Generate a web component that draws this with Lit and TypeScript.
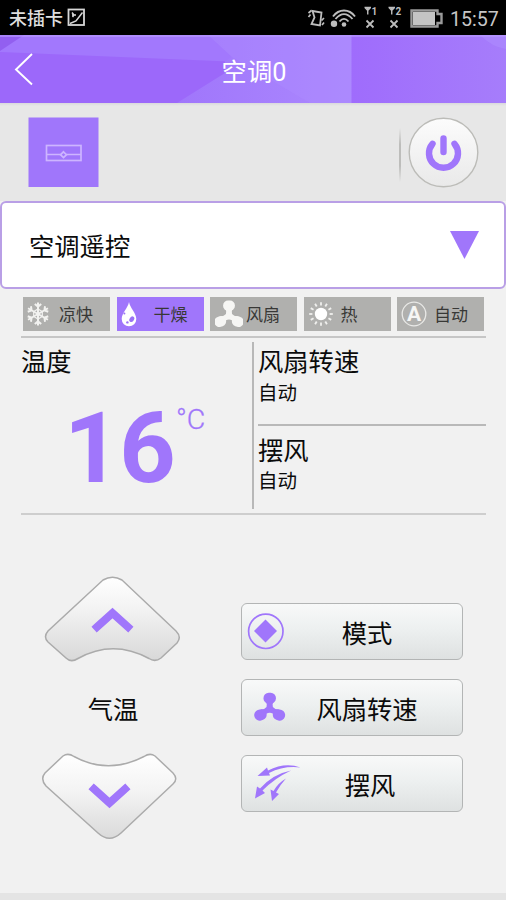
import { LitElement, html, css, svg } from "lit";
import { customElement, property } from "lit/decorators.js";

const fan = svg`
  <rect x="-5.500" y="-12.600" width="11" height="9.600" rx="4.600"/>
  <rect x="-5.500" y="-4.800" width="11" height="9.600" rx="4.600" transform="translate(-8.200 7) rotate(-18)"/>
  <rect x="-5.500" y="-4.800" width="11" height="9.600" rx="4.600" transform="translate(8.200 7) rotate(18)"/>
  <path d="M-3.800 -5L3.800 -5Q1.800 -2.500 2.800 0Q5 2.400 8 2.200L6 11Q4.500 7.500 3 6Q0 4 -3 6Q-4.500 7.500 -6 11L-8 2.200Q-5 2.400 -2.800 0Q-1.800 -2.500 -3.800 -5Z"/>`;

const flake = [0, 60, 120, 180, 240, 300].map(
  (a) => svg`<path transform="rotate(${a})" d="M0 0V-11.500M-3.200 -10L0 -7.400L3.200 -10"/>`
);
const rays = Array.from({ length: 12 }, (_, i) => svg`<path transform="rotate(${i * 30})" d="M0 -8.600V-11.800"/>`);

const icons: Record<string, unknown> = {
  cool: svg`<g fill="none" stroke="#f2f2f0" stroke-width="2">${flake}<path d="M0 -5L4.300 -2.500V2.500L0 5L-4.300 2.500V-2.500Z" stroke-width="1.2"/></g>`,
  dry: svg`<path fill="#fff" d="M0 -12C1 -6 7.300 -1 7.300 5A7.300 7.300 0 0 1 -7.300 5C-7.300 -1 -1 -6 0 -12Z"/>
    <g fill="#9a72f4"><ellipse cx="2.800" cy="5.200" rx="2.200" ry="3" transform="rotate(35 2.800 5.200)"/><circle cx="-1.600" cy="8.400" r="1.200"/><circle cx="-4.600" cy="-.6" r="1"/></g>`,
  fan: svg`<g fill="#f6f6f4">${fan}</g>`,
  heat: svg`<circle r="6.200" fill="#fff"/><g stroke="#f0f0ee" stroke-width="1.8">${rays}</g>`,
  auto: svg`<circle r="11.800" fill="none" stroke="#e9e9e7" stroke-width="1.300"/><text y="7.400" text-anchor="middle" font-family="Roboto, sans-serif" font-weight="700" font-size="21" fill="#f6f6f4">A</text>`,
};

@customElement("mode-chip")
class ModeChip extends LitElement {
  @property() icon = "cool";
  @property() label = "";
  static styles = css`
    :host { display: flex; flex: 1 1 0; height: 34px; align-items: center; background: #b0b0ae; color: #383836; }
    :host([active]) { background: #a076fb; }
    svg { flex: none; width: 26px; height: 26px; margin-left: 2px; }
    :host([icon="dry"]) svg { margin-left: -1px; }
    :host([icon="fan"]) svg { margin-left: 5px; width: 28px; height: 28px; }
    :host([icon="heat"]) svg { margin-left: 4px; }
    :host([icon="auto"]) svg { margin-left: 4px; }
    .label { margin-left: 8px; font-size: 17px; line-height: 34px; padding-top: 1px; white-space: nowrap; }
    :host([icon="dry"]) .label { margin-left: 12px; }
    :host([icon="fan"]) .label { margin-left: 3px; }
    :host([icon="heat"]) .label { margin-left: 7px; }
    :host([icon="auto"]) .label { margin-left: 7px; }
  `;
  render() {
    return html`<svg viewBox="-13 -13 26 26">${icons[this.icon]}</svg><span class="label">${this.label}</span>`;
  }
}

@customElement("remote-button")
class RemoteButton extends LitElement {
  @property() label = "";
  static styles = css`
    :host { display: flex; box-sizing: border-box; height: 57px; border: 1.5px solid #b3b5b5; border-radius: 6px;
      background: linear-gradient(#f8f9f9, #edf0f0 45%, #dee1e1); }
    .art { flex: none; width: 61px; }
    .label { width: 128px; text-align: center; font-size: 25.3px; line-height: 57px; padding-top: 2px; color: #0b0b0b; white-space: nowrap; }
    :host([shifted]) .art { width: 64px; }
  `;
  render() {
    return html`<div class="art"><slot></slot></div><div class="label">${this.label}</div>`;
  }
}

@customElement("app-root")
class AppRoot extends LitElement {
  static styles = css`
    :host { display: flex; flex-direction: column; box-sizing: border-box; width: 506px; height: 900px; overflow: hidden;
      background: #f1f1f1; color: #0b0b0b; font-family: Roboto, "Noto Sans CJK SC", sans-serif; }
    svg { display: block; flex: none; }
    .status { display: flex; flex: none; height: 35px; background: #000; color: #dedede; align-items: center; }
    .carrier { width: 56px; padding: 2px 0 0 9px; font-size: 18px; font-weight: 500; line-height: 35px; white-space: nowrap; }
    .nosim { margin-left: 2px; }
    .sysicons { margin-left: 221px; }
    .clock { margin-left: 3px; font-size: 19.6px; line-height: 35px; padding-top: 4px; color: #c6c6c6; }
    .header { display: grid; flex: none; height: 68px; }
    .header > * { grid-area: 1 / 1; }
    .title { text-align: center; font-size: 25.3px; line-height: 76px; height: 68px; color: #fff; padding-left: 2px; }
    .device { display: flex; flex: none; height: 98px; box-sizing: border-box; padding: 14px 27px 0 28px; justify-content: space-between;
      background: linear-gradient(#d9d9dc, #e7e7e7 3px); }
    .power { display: flex; }
    .divider { width: 2px; height: 54px; margin: 11px 7px 0 0; background: linear-gradient(transparent, #bdbdbb 30%, #bdbdbb 70%, transparent); }
    .select { display: flex; flex: none; box-sizing: border-box; height: 88px; align-items: center; justify-content: space-between;
      border: 2px solid #b99fe6; border-radius: 6px; background: #fff; padding: 0 25px 0 27px; }
    .select-label { font-size: 25.3px; line-height: 84px; padding-top: 6px; }
    .modes { display: flex; flex: none; gap: 6.5px; margin: 8px 22px 0 23px; }
    .readout { display: flex; flex: none; height: 179px; box-sizing: border-box; margin: 5px 20px 0 21px;
      border-top: 2px solid #c6c6c6; border-bottom: 2px solid #cecece; padding: 4px 0; }
    .temp { width: 231px; border-right: 2px solid #b8b8b8; }
    .name { font-size: 25.3px; line-height: 30px; padding-top: 6px; }
    .name.low { padding-top: 11px; }
    .value { display: flex; color: #a076fb; padding-left: 43px; margin-top: 13px; }
    .digits { font-size: 98.5px; font-weight: 700; line-height: 116px; letter-spacing: -1.2px; width: 112px; }
    .unit { font-size: 28.5px; font-weight: 300; line-height: 34px; margin-top: 12px; -webkit-text-stroke: .3px #a076fb; }
    .side { flex: 1; padding-left: 4px; }
    .fanrow { height: 82px; border-bottom: 2px solid #b9b9b9; }
    .setting { font-size: 19.5px; line-height: 24px; padding-top: 4px; }
    .setting.low { padding-top: 3px; }
    .controls { display: flex; flex: none; margin-top: 60px; padding-left: 41px; }
    .pad { display: flex; flex-direction: column; width: 200px; }
    .padlabel { font-size: 25.3px; line-height: 36px; width: 144px; text-align: center; margin: 30px 0 22px; }
    .actions { display: flex; flex-direction: column; gap: 19px; width: 222px; padding-top: 28px; }
    .spacer { flex: 1; }
    .foot { flex: none; height: 7px; background: #e4e4e4; }
  `;
  render() {
    return html`
      <div class="status">
        <span class="carrier">未插卡</span>
        <svg class="nosim" width="19" height="19" viewBox="0 0 19 19" fill="none" stroke="#d6d6d6" stroke-width="1.8">
          <rect x="1.500" y="1.500" width="15.500" height="15.500"/><path d="M5 4.500L7 7L5.500 9M5 7H9M3 15.500L9 13L15.500 4.500" stroke-width="1.500"/>
        </svg>
        <svg class="sysicons" width="140" height="35" viewBox="307 0 140 35" fill="none" stroke="#bdbdbd" stroke-width="1.500">
          <path d="M312.500 11L321.500 12.500L320 25.500L311.500 24L314.500 17.500Z" stroke-width="1.800"/>
          <path d="M311.500 10.500L308.500 13M310.500 14.500L308.500 17M324 18L321.500 20.500M324 22.500L322 25" stroke-width="1.700"/>
          <circle cx="334" cy="23.700" r="3.200" fill="#bdbdbd" stroke="none"/><circle cx="344" cy="24.500" r="2.300" fill="#bdbdbd" stroke="none"/>
          <path d="M333 16.500C339 8.500 349 8.500 355 16.500M335.500 19C341 12.500 347 12.500 352.500 19M339.500 21.500C342.500 18 345.500 18 348.500 21.500" stroke-width="1.900"/>
          <path d="M364.500 7.500H371M365 7.500L367.750 10.500L370.500 7.500M367.750 7.500V14.500M388.500 7.500H395M389 7.500L391.750 10.500L394.500 7.500M391.750 7.500V14.500" stroke-width="1.400"/>
          <path d="M366.500 20.500L373.500 27.500M373.500 20.500L366.500 27.500M390.500 20.500L397.500 27.500M397.500 20.500L390.500 27.500" stroke-width="1.800"/>
          <g fill="#bdbdbd" stroke="none" font-family="Roboto, sans-serif" font-weight="700" font-size="10"><text x="371.500" y="14.500">1</text><text x="395.500" y="14.500">2</text></g>
          <path d="M411.500 10.500H437.500V14H441.500V23H437.500V26.500H411.500Z" stroke="#9a9a9a" stroke-width="2.400"/>
          <rect x="413" y="12" width="22" height="13" fill="#c4c4c4" stroke="none"/>
        </svg>
        <span class="clock">15:57</span>
      </div>

      <div class="header">
        <svg width="506" height="68" viewBox="0 0 506 68">
          <defs>
            <linearGradient id="shard"><stop offset="0" stop-color="#a076fb"/><stop offset="1" stop-color="#ab88fe"/></linearGradient>
            <linearGradient id="right"><stop offset="0" stop-color="#9f6cfc"/><stop offset="1" stop-color="#a67dfb"/></linearGradient>
          </defs>
          <rect width="506" height="68" fill="#9c68fa"/>
          <path d="M0 0H240V27L0 17Z" fill="#a278fd"/>
          <path d="M0 0H24L0 16Z" fill="#925ff0"/>
          <path d="M208 0H352V68H177L225 38V26L232 22Z" fill="url(#shard)"/>
          <path d="M232 22L208 0H352V68H310Z" fill="#ae8dff" opacity=".35"/>
          <rect x="351.500" width="155" height="68" fill="url(#right)"/>
          <path d="M480 0H506V14Q492 12 480 0Z" fill="#ae8cff" opacity=".6"/>
          <rect width="506" height="2" fill="#b99bff" opacity=".6"/>
          <path d="M32 19L16 34.500L32 49.500" fill="none" stroke="#fff" stroke-width="1.900"/>
        </svg>
        <div class="title">空调0</div>
      </div>

      <div class="device">
        <svg width="71" height="71" viewBox="0 0 71 71">
          <rect x=".5" y=".5" width="70" height="69.500" fill="#a076fb"/>
          <g fill="none" stroke="#cdb5ff" stroke-width="1.700"><rect x="18.500" y="28.500" width="34.500" height="15"/><path d="M18.500 37.500H32.500M38.500 37.500H53"/><path d="M35.500 34.800L38.500 37.700L35.500 40.600L32.500 37.700Z"/></g>
        </svg>
        <div class="power">
          <div class="divider"></div>
          <svg width="71" height="71" viewBox="0 0 71 71">
            <defs><linearGradient id="pw" x2="0" y2="1"><stop offset="0" stop-color="#fcfcfc"/><stop offset="1" stop-color="#e9e9e9"/></linearGradient></defs>
            <circle cx="35.500" cy="35.500" r="34.300" fill="url(#pw)" stroke="#bcbcb8" stroke-width="1.400"/>
            <path d="M24.500 26.800A14.500 14.500 0 1 0 46.500 26.800" fill="none" stroke="#a076fb" stroke-width="6.400" stroke-linecap="round"/>
            <path d="M35.500 21.500V35" stroke="#a076fb" stroke-width="6.400" stroke-linecap="round"/>
          </svg>
        </div>
      </div>

      <div class="select">
        <span class="select-label">空调遥控</span>
        <svg width="29" height="30" viewBox="0 0 29 30"><path d="M0 1H29L14.500 29Z" fill="#a076fb"/></svg>
      </div>

      <div class="modes">
        <mode-chip icon="cool" label="凉快"></mode-chip>
        <mode-chip icon="dry" label="干燥" active></mode-chip>
        <mode-chip icon="fan" label="风扇"></mode-chip>
        <mode-chip icon="heat" label="热"></mode-chip>
        <mode-chip icon="auto" label="自动"></mode-chip>
      </div>

      <div class="readout">
        <div class="temp">
          <div class="name">温度</div>
          <div class="value"><span class="digits">16</span><span class="unit">°C</span></div>
        </div>
        <div class="side">
          <div class="fanrow"><div class="name">风扇转速</div><div class="setting">自动</div></div>
          <div class="name low">摆风</div>
          <div class="setting low">自动</div>
        </div>
      </div>

      <div class="controls">
        <div class="pad">
          <svg width="144" height="88" viewBox="41 575 144 88">
            <defs><linearGradient id="up" x2="0" y2="1"><stop offset="0" stop-color="#fff"/><stop offset=".4" stop-color="#f2f2f2"/><stop offset="1" stop-color="#d8d8d8"/></linearGradient></defs>
            <path d="M103 580Q112.500 574.500 122 580L176 631Q182 637 177 643L161 658Q155 662.500 149 658.500Q113 639 78 658.500Q71 663 66 658L48 642Q43 637 48 631Z" fill="url(#up)" stroke="#ababab" stroke-width="1.500"/>
            <path d="M97 627L112.500 613L128 627" fill="none" stroke="#a076fb" stroke-width="7.800" stroke-linecap="square"/>
          </svg>
          <div class="padlabel">气温</div>
          <svg width="144" height="90" viewBox="41 751 144 90">
            <defs><linearGradient id="down" x2="0" y2="1"><stop offset="0" stop-color="#fff"/><stop offset=".45" stop-color="#f3f3f3"/><stop offset="1" stop-color="#dadada"/></linearGradient></defs>
            <path d="M63 756Q68 752.500 74 756.500Q108 775 144 756.500Q150 752.500 155 756L173 773Q178.500 779 173 784L121 833Q109.500 843.500 98 833L46 786Q40 779 45 773Z" fill="url(#down)" stroke="#ababab" stroke-width="1.500"/>
            <path d="M94 789L109.500 803L125 789" fill="none" stroke="#a076fb" stroke-width="7.800" stroke-linecap="square"/>
          </svg>
        </div>
        <div class="actions">
          <remote-button label="模式">
            <svg width="60" height="54" viewBox="0 0 60 54"><circle cx="23.800" cy="27.300" r="17.200" fill="none" stroke="#a076fb" stroke-width="1.700"/><path d="M23.500 15.500L35 27L23.500 38.500L12 27Z" fill="#a076fb"/></svg>
          </remote-button>
          <remote-button label="风扇转速">
            <svg width="60" height="54" viewBox="0 0 60 54"><g transform="translate(27.700 27) scale(1.130)" fill="#a076fb">${fan}</g></svg>
          </remote-button>
          <remote-button label="摆风" shifted>
            <svg width="64" height="54" viewBox="0 0 64 54">
              <g fill="#a076fb">
                <path d="M15.500 20L25 11.500L26 14.500Q43 6 58.500 11.500Q42 9.500 27 17L28 19.500Z"/>
                <path d="M13 42.500L15 30.500L18 32.500Q31 18 49 14.500Q33 22 20.500 34.500L23 37Z"/>
                <path d="M30 45L28.500 33.500L31.500 35Q36 27 44 22.500Q38 29 34 36.500L37 38Z"/>
              </g>
            </svg>
          </remote-button>
        </div>
      </div>
      <div class="spacer"></div>
      <div class="foot"></div>
    `;
  }
}
